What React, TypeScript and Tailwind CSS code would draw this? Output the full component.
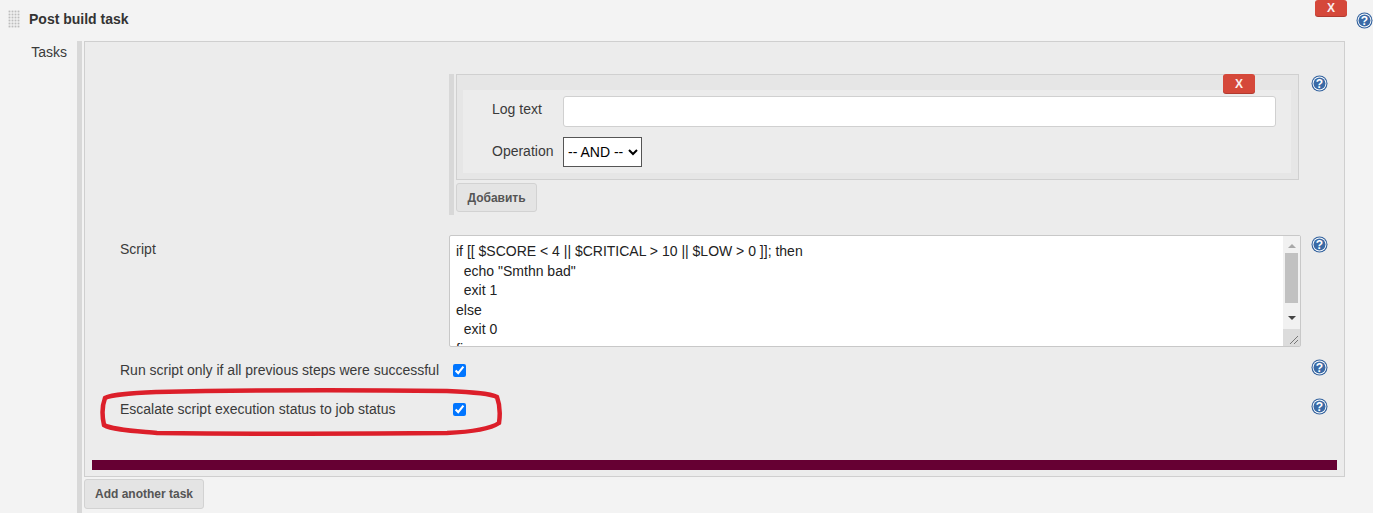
import React from 'react';

const scriptText = `if [[ $SCORE < 4 || $CRITICAL > 10 || $LOW > 0 ]]; then
  echo "Smthn bad"
  exit 1
else
  exit 0
fi`;

const HelpIcon: React.FC = () => (
  <svg width="17" height="17" viewBox="0 0 17 17" className="block">
    <circle cx="8.5" cy="8.5" r="8" fill="#2f5f9c" />
    <circle cx="8.5" cy="8.5" r="6.9" fill="#ffffff" />
    <circle cx="8.5" cy="8.5" r="6" fill="#3a6aa6" />
    <text x="8.5" y="12.6" textAnchor="middle" fontSize="12" fontWeight="700" fill="#ffffff" fontFamily="'Liberation Sans', sans-serif">?</text>
  </svg>
);

const GripIcon: React.FC = () => (
  <svg width="12" height="18" viewBox="0 0 12 18" className="block">
    <rect width="12" height="18" fill="#fbfbfb" />
    {[0, 1, 2, 3, 4, 5].map((r) =>
      [0, 1, 2, 3].map((c) => <rect key={`${r}-${c}`} x={c * 3 + 0.5} y={r * 3 + 0.5} width="2" height="2" fill="#bdbdbd" />)
    )}
  </svg>
);

const DeleteButton: React.FC<{ className: string }> = ({ className }) => (
  <button className={`absolute flex w-[32px] items-center justify-center rounded-[3px] bg-[#d5483a] text-[12px] font-bold text-[#fbeeee] shadow-[0_1px_0_#b03a30] ${className}`}>
    X
  </button>
);

const GrayButton: React.FC<{ label: string; className: string }> = ({ label, className }) => (
  <button className={`rounded-[3px] border border-[#d2d2d2] bg-[#e4e4e4] text-[12px] font-bold text-[#555] ${className}`}>{label}</button>
);

const CheckRow: React.FC<{ label: string; className: string }> = ({ label, className }) => (
  <div className={`flex items-center ${className}`}>
    <span className="w-[368px] pl-[35px] pt-[1px] whitespace-nowrap">{label}</span>
    <input type="checkbox" defaultChecked readOnly className="h-[13px] w-[13px] accent-[#0075ff]" />
    <span className="mb-[6px] ml-[845px]">
      <HelpIcon />
    </span>
  </div>
);

export default function App() {
  return (
    <div className="relative h-[513px] w-[1373px] overflow-hidden bg-[#f3f3f3] font-['Liberation_Sans',Arial,sans-serif] text-[14px] text-[#3a3a3a]">
      {/* header */}
      <div className="relative flex h-[41px] items-start">
        <div className="ml-[8px] mt-[10px]">
          <GripIcon />
        </div>
        <span className="ml-[9px] mt-[11px] text-[14px] leading-[16px] font-bold text-[#333]">Post build task</span>
        <DeleteButton className="left-[1315px] top-0 h-[16px]" />
        <div className="absolute top-[12px] left-[1356px]">
          <HelpIcon />
        </div>
      </div>

      <div className="flex h-[472px]">
        <div className="w-[67px] pt-[3px] text-right leading-[16px]">Tasks</div>
        <div className="ml-[10px] w-[5px] bg-[#d8d8d8]" />
        <div className="ml-[2px] w-[1261px]">
          <div className="relative h-[436px] border border-[#cfcfcf] bg-[#ececec] pt-[32px]">
            {/* conditions block */}
            <div className="flex h-[141px]">
              <div className="ml-[364px] w-[5px] bg-[#d8d8d8]" />
              <div className="ml-[2px] w-[843px]">
                <div className="relative h-[106px] border border-[#d0d0d0] bg-[#e6e6e6] px-[6px] pt-[15px]">
                  <div className="h-[83px] w-[828px] bg-[#ececec] pt-[6px]">
                    <div className="flex h-[31px] items-center">
                      <span className="mb-[4px] w-[100px] pl-[29px]">Log text</span>
                      <input className="h-[31px] w-[713px] rounded-[3px] border border-[#d0d0d0] bg-white" />
                    </div>
                    <div className="mt-[10px] flex h-[30px] items-center">
                      <span className="mb-[2px] w-[100px] pl-[29px]">Operation</span>
                      <select className="h-[30px] w-[79px] border border-[#555] bg-white text-[14px] text-black">
                        <option>-- AND --</option>
                      </select>
                    </div>
                  </div>
                  <DeleteButton className="left-[766px] top-[-1px] h-[19px]" />
                </div>
                <GrayButton label="Добавить" className="mt-[3px] h-[29px] w-[81px]" />
              </div>
              <div className="ml-[12px] mt-[1px]">
                <HelpIcon />
              </div>
            </div>

            {/* script */}
            <div className="mt-[20px] flex h-[112px] items-start">
              <span className="w-[364px] pl-[35px] pt-[6px] leading-[16px]">Script</span>
              <div className="relative h-[112px] w-[852px]">
                <textarea
                  readOnly
                  value={scriptText}
                  className="h-full w-full resize-none overflow-hidden rounded-[2px] border border-[#c8c8c8] bg-white pt-[6px] pr-[24px] pl-[6px] text-[14px] leading-[19.6px] text-[#222]"
                />
                <div className="absolute top-[1px] right-[1px] bottom-[1px] flex w-[17px] flex-col items-center bg-[#f1f1f1]">
                  <div className="mt-[8px] h-0 w-0 border-x-[4px] border-b-[4px] border-x-transparent border-b-[#a8a8a8]" />
                  <div className="mt-[5px] h-[50px] w-[13px] bg-[#c1c1c1]" />
                  <div className="mt-[13px] h-0 w-0 border-x-[4px] border-t-[4px] border-x-transparent border-t-[#444]" />
                  <div className="relative mt-auto h-[17px] w-full bg-[#dcdcdc]">
                    <svg width="17" height="17" viewBox="0 0 17 17" className="absolute inset-0">
                      <path d="M7 15 L15 7 M11 15 L15 11" stroke="#777" strokeWidth="1" fill="none" />
                    </svg>
                  </div>
                </div>
              </div>
              <div className="ml-[10px] mt-[1px]">
                <HelpIcon />
              </div>
            </div>

            <CheckRow label="Run script only if all previous steps were successful" className="mt-[13px] h-[20px]" />
            <CheckRow label="Escalate script execution status to job status" className="mt-[19px] h-[20px]" />

            <div className="mx-[7px] mt-[41px] h-[10px] bg-[#660033]" />
          </div>
          <GrayButton label="Add another task" className="mt-[2px] h-[30px] w-[120px]" />
        </div>
      </div>

      {/* hand drawn highlight */}
      <svg width="1373" height="513" className="pointer-events-none absolute inset-0">
        <path
          d="M105 398 C112 394 135 393 157 392 C250 390 360 390 447 391 C470 392 490 393 497 397 C500 405 500 416 499 423 C490 429 470 432 447 433 C360 434 250 434 157 433 C135 431 112 430 104 425 C102 416 102 406 105 398 Z"
          fill="none"
          stroke="#dc1f2a"
          strokeWidth="4.5"
        />
      </svg>
    </div>
  );
}
